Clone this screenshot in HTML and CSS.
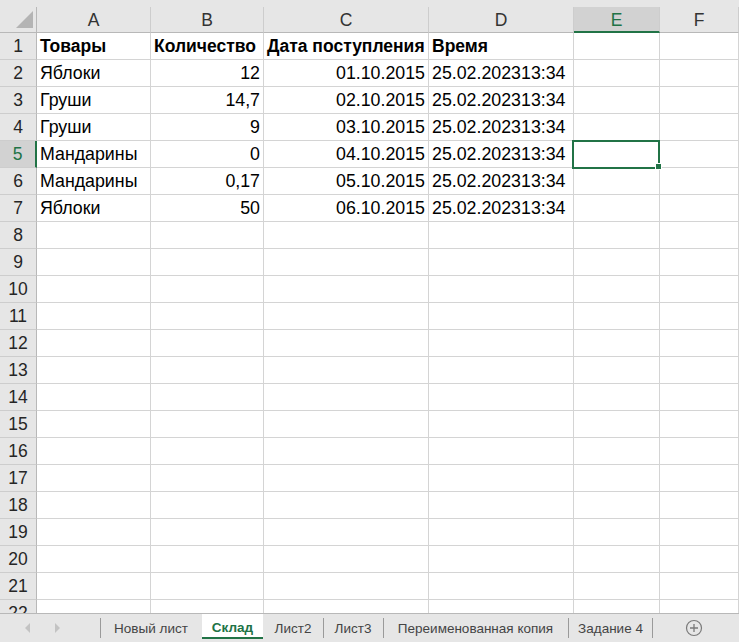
FILE: index.html
```html
<!DOCTYPE html>
<html lang="ru">
<head>
<meta charset="utf-8">
<title>Склад</title>
<link rel="stylesheet" href="styles.css">
</head>
<body>
<div class="app">
  <div class="sheet">
    <div class="grid">
      <div class="corner"><span class="tri"></span></div>
      <div class="ch">A</div>
      <div class="ch">B</div>
      <div class="ch">C</div>
      <div class="ch">D</div>
      <div class="ch ch-sel">E</div>
      <div class="ch">F</div>

      <div class="rh">1</div>
      <div class="c b">Товары</div><div class="c b">Количество</div><div class="c b">Дата поступления</div><div class="c b">Время</div><div class="c"></div><div class="c"></div>

      <div class="rh">2</div>
      <div class="c">Яблоки</div><div class="c r">12</div><div class="c r">01.10.2015</div><div class="c">25.02.202313:34</div><div class="c"></div><div class="c"></div>

      <div class="rh">3</div>
      <div class="c">Груши</div><div class="c r">14,7</div><div class="c r">02.10.2015</div><div class="c">25.02.202313:34</div><div class="c"></div><div class="c"></div>

      <div class="rh">4</div>
      <div class="c">Груши</div><div class="c r">9</div><div class="c r">03.10.2015</div><div class="c">25.02.202313:34</div><div class="c"></div><div class="c"></div>

      <div class="rh rh-sel">5</div>
      <div class="c">Мандарины</div><div class="c r">0</div><div class="c r">04.10.2015</div><div class="c">25.02.202313:34</div><div class="c active"><span class="sel"></span><span class="handle"></span></div><div class="c"></div>

      <div class="rh">6</div>
      <div class="c">Мандарины</div><div class="c r">0,17</div><div class="c r">05.10.2015</div><div class="c">25.02.202313:34</div><div class="c"></div><div class="c"></div>

      <div class="rh">7</div>
      <div class="c">Яблоки</div><div class="c r">50</div><div class="c r">06.10.2015</div><div class="c">25.02.202313:34</div><div class="c"></div><div class="c"></div>

      <div class="rh">8</div><div class="c"></div><div class="c"></div><div class="c"></div><div class="c"></div><div class="c"></div><div class="c"></div>
      <div class="rh">9</div><div class="c"></div><div class="c"></div><div class="c"></div><div class="c"></div><div class="c"></div><div class="c"></div>
      <div class="rh">10</div><div class="c"></div><div class="c"></div><div class="c"></div><div class="c"></div><div class="c"></div><div class="c"></div>
      <div class="rh">11</div><div class="c"></div><div class="c"></div><div class="c"></div><div class="c"></div><div class="c"></div><div class="c"></div>
      <div class="rh">12</div><div class="c"></div><div class="c"></div><div class="c"></div><div class="c"></div><div class="c"></div><div class="c"></div>
      <div class="rh">13</div><div class="c"></div><div class="c"></div><div class="c"></div><div class="c"></div><div class="c"></div><div class="c"></div>
      <div class="rh">14</div><div class="c"></div><div class="c"></div><div class="c"></div><div class="c"></div><div class="c"></div><div class="c"></div>
      <div class="rh">15</div><div class="c"></div><div class="c"></div><div class="c"></div><div class="c"></div><div class="c"></div><div class="c"></div>
      <div class="rh">16</div><div class="c"></div><div class="c"></div><div class="c"></div><div class="c"></div><div class="c"></div><div class="c"></div>
      <div class="rh">17</div><div class="c"></div><div class="c"></div><div class="c"></div><div class="c"></div><div class="c"></div><div class="c"></div>
      <div class="rh">18</div><div class="c"></div><div class="c"></div><div class="c"></div><div class="c"></div><div class="c"></div><div class="c"></div>
      <div class="rh">19</div><div class="c"></div><div class="c"></div><div class="c"></div><div class="c"></div><div class="c"></div><div class="c"></div>
      <div class="rh">20</div><div class="c"></div><div class="c"></div><div class="c"></div><div class="c"></div><div class="c"></div><div class="c"></div>
      <div class="rh">21</div><div class="c"></div><div class="c"></div><div class="c"></div><div class="c"></div><div class="c"></div><div class="c"></div>
      <div class="rh">22</div><div class="c"></div><div class="c"></div><div class="c"></div><div class="c"></div><div class="c"></div><div class="c"></div>
    </div>
  </div>
  <div class="tabbar">
    <div class="nav">
      <svg class="arrow" width="6" height="10" viewBox="0 0 6 10"><path d="M5 0 L0 5 L5 10 Z" fill="#c3c3c3"/></svg>
      <svg class="arrow" width="6" height="10" viewBox="0 0 6 10"><path d="M1 0 L6 5 L1 10 Z" fill="#c3c3c3"/></svg>
    </div>
    <div class="tab t1">Новый лист</div>
    <div class="tab active-tab">Склад</div>
    <div class="tab t3">Лист2</div>
    <div class="tab t4">Лист3</div>
    <div class="tab t5">Переименованная копия</div>
    <div class="tab t6">Задание 4</div>
    <div class="add">
      <svg width="18" height="18" viewBox="0 0 18 18"><circle cx="9" cy="9" r="7.5" fill="none" stroke="#7a7a7a" stroke-width="1.2"/><path d="M9 5 V13 M5 9 H13" stroke="#7a7a7a" stroke-width="1.3"/></svg>
    </div>
  </div>
</div>
</body>
</html>
```

FILE: styles.css
```css
* { box-sizing: border-box; }
html, body { margin: 0; padding: 0; }
body {
  width: 739px;
  height: 642px;
  overflow: hidden;
  background: #e6e6e6;
  font-family: "Liberation Sans", Arial, sans-serif;
}
.app {
  display: flex;
  flex-direction: column;
  height: 642px;
}
.sheet {
  height: 613px;
  overflow: hidden;
  padding-top: 7px;
  background: #e6e6e6;
}
.grid {
  display: grid;
  grid-template-columns: 37px 114px 113px 165px 145px 86px 1fr;
  grid-template-rows: 26px;
  grid-auto-rows: 27px;
}
.corner {
  background: #e6e6e6;
  border-right: 1px solid #b8b8b8;
  border-bottom: 1px solid #b8b8b8;
  position: relative;
}
.tri {
  position: absolute;
  left: 16px;
  top: 4px;
  width: 0;
  height: 0;
  border-left: 17px solid transparent;
  border-bottom: 17px solid #b4b4b4;
}
.ch {
  background: #e6e6e6;
  border-right: 1px solid #cdcdcd;
  border-bottom: 1px solid #b8b8b8;
  color: #333;
  font-size: 17.5px;
  display: flex;
  align-items: center;
  justify-content: center;
  padding-top: 1px;
}
.ch-sel {
  background: #d2d2d2;
  color: #217346;
  border-bottom: 2px solid #217346;
  padding-top: 2px;
}
.rh {
  background: #e6e6e6;
  border-right: 1px solid #b8b8b8;
  border-bottom: 1px solid #cdcdcd;
  color: #262626;
  font-size: 17.5px;
  display: flex;
  align-items: center;
  justify-content: center;
  padding-top: 1px;
}
.rh-sel {
  background: #d2d2d2;
  color: #217346;
  border-right: 2px solid #217346;
}
.c {
  background: #fff;
  border-right: 1px solid #d4d4d4;
  border-bottom: 1px solid #d4d4d4;
  color: #000;
  font-size: 17.8px;
  display: flex;
  align-items: center;
  padding: 1px 3px 0 3px;
  white-space: nowrap;
  overflow: hidden;
}
.c.r { justify-content: flex-end; }
.c.b { font-weight: bold; font-size: 17.5px; }
.c.active { overflow: visible; position: relative; }
.sel {
  position: absolute;
  left: -2px;
  right: -1px;
  top: -1px;
  bottom: -2px;
  border: 2px solid #217346;
}
.handle {
  position: absolute;
  right: -3px;
  bottom: -3px;
  width: 7px;
  height: 7px;
  background: #217346;
  border: 1px solid #fff;
}
.tabbar {
  height: 29px;
  border-top: 1px solid #b8b8b8;
  background: #e6e6e6;
  display: flex;
  align-items: stretch;
  font-size: 13.5px;
  color: #444;
}
.nav {
  width: 100px;
  display: flex;
  align-items: center;
  gap: 23px;
  padding-left: 25px;
}
.tab {
  display: flex;
  align-items: center;
  justify-content: center;
  position: relative;
}
.tab::before {
  content: "";
  position: absolute;
  left: 0;
  top: 4px;
  bottom: 4px;
  border-left: 1px solid #9a9a9a;
}
.t1 { width: 102px; }
.active-tab {
  width: 61px;
  background: #fff;
  color: #217346;
  font-weight: bold;
  border-bottom: 2px solid #217346;
  margin-bottom: 3px;
  padding-top: 3px;
}
.active-tab::before { display: none; }
.t3 { width: 60px; }
.t3::before { display: none; }
.t4 { width: 60px; }
.t5 { width: 185px; }
.t6 { width: 85px; }
.t6::after {
  content: "";
  position: absolute;
  right: 0;
  top: 4px;
  bottom: 4px;
  border-right: 1px solid #9a9a9a;
}
.add {
  flex: 1;
  display: flex;
  align-items: center;
  justify-content: center;
  padding-right: 4px;
}
```
